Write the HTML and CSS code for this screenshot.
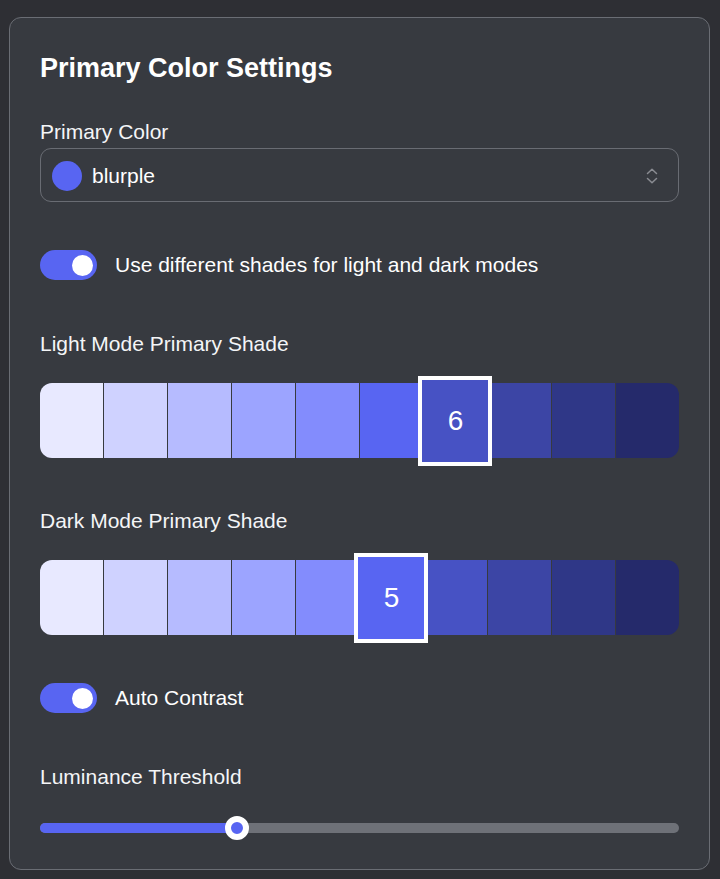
FILE: index.html
```html
<!DOCTYPE html>
<html lang="en">
<head>
<meta charset="utf-8">
<title>Primary Color Settings</title>
<link rel="stylesheet" href="styles.css">
</head>
<body>
  <section class="card">
    <h2 class="title">Primary Color Settings</h2>

    <label class="label label-first">Primary Color</label>
    <div class="select">
      <span class="select-dot"></span>
      <span class="select-value">blurple</span>
      <svg class="select-chevron" width="16" height="16" viewBox="0 0 16 16" aria-hidden="true">
        <path d="M3.5 5.5 L8 1.2 L12.5 5.5" fill="none" stroke="#8a8c92" stroke-width="1.5" stroke-linecap="round" stroke-linejoin="round"/>
        <path d="M3.5 10.5 L8 14.8 L12.5 10.5" fill="none" stroke="#8a8c92" stroke-width="1.5" stroke-linecap="round" stroke-linejoin="round"/>
      </svg>
    </div>

    <div class="toggle-row toggle-row-first">
      <span class="toggle"><span class="toggle-knob"></span></span>
      <span class="toggle-text">Use different shades for light and dark modes</span>
    </div>

    <label class="label label-section">Light Mode Primary Shade</label>
    <div class="shades">
      <div class="shade s0"></div>
      <div class="shade s1"></div>
      <div class="shade s2"></div>
      <div class="shade s3"></div>
      <div class="shade s4"></div>
      <div class="shade s5"></div>
      <div class="shade s6 selected"><span class="shade-num">6</span></div>
      <div class="shade s7"></div>
      <div class="shade s8"></div>
      <div class="shade s9"></div>
    </div>

    <label class="label label-section2">Dark Mode Primary Shade</label>
    <div class="shades shades-dark">
      <div class="shade s0"></div>
      <div class="shade s1"></div>
      <div class="shade s2"></div>
      <div class="shade s3"></div>
      <div class="shade s4"></div>
      <div class="shade s5 selected"><span class="shade-num">5</span></div>
      <div class="shade s6"></div>
      <div class="shade s7"></div>
      <div class="shade s8"></div>
      <div class="shade s9"></div>
    </div>

    <div class="toggle-row toggle-row-second">
      <span class="toggle"><span class="toggle-knob"></span></span>
      <span class="toggle-text">Auto Contrast</span>
    </div>

    <label class="label label-lum">Luminance Threshold</label>
    <div class="slider">
      <div class="slider-track">
        <div class="slider-fill" style="width: 197px"></div>
      </div>
      <span class="slider-thumb" style="left: 197px"></span>
    </div>
  </section>
</body>
</html>
```

FILE: styles.css
```css
* {
  box-sizing: border-box;
}

html, body {
  margin: 0;
  background: #2e2f34;
}

body {
  padding: 17px 0 9px 9px;
  font-family: "Liberation Sans", Arial, sans-serif;
  color: #ffffff;
}

.card {
  width: 701px;
  background: #373a40;
  border: 1px solid #6a6d74;
  border-radius: 12px;
  padding: 35px 30px 29px 30px;
  display: flex;
  flex-direction: column;
}

.title {
  margin: 0;
  font-size: 27px;
  line-height: 31px;
  font-weight: 700;
  color: #ffffff;
}

.label {
  display: block;
  font-size: 21px;
  line-height: 24px;
  color: #f4f5f7;
}

.label-first { margin-top: 36px; }
.label-section { margin-top: 52px; }
.label-section2 { margin-top: 51px; }
.label-lum { margin-top: 52px; }

.select {
  margin-top: 4px;
  height: 54px;
  border: 1px solid #696c73;
  border-radius: 11px;
  display: flex;
  align-items: center;
  padding: 1px 18px 0 11px;
}

.select-dot {
  width: 30px;
  height: 30px;
  border-radius: 50%;
  background: #5865f2;
  flex: none;
}

.select-value {
  margin-left: 10px;
  font-size: 21px;
  color: #ffffff;
  flex: 1;
}

.select-chevron {
  flex: none;
  display: block;
}

.toggle-row {
  display: flex;
  align-items: center;
  gap: 18px;
  height: 30px;
}

.toggle-row-first { margin-top: 48px; }
.toggle-row-second { margin-top: 48px; }

.toggle {
  width: 57px;
  height: 30px;
  border-radius: 15px;
  background: #5865f2;
  display: flex;
  align-items: center;
  justify-content: flex-end;
  padding-right: 4px;
  flex: none;
}

.toggle-knob {
  width: 21px;
  height: 21px;
  border-radius: 50%;
  background: #ffffff;
}

.toggle-text {
  font-size: 21px;
  color: #ffffff;
}

.shades {
  margin-top: 27px;
  height: 75px;
  display: flex;
}

.shade {
  flex: 1 1 0;
  border-right: 1px solid #373a40;
  position: relative;
  display: flex;
  align-items: center;
  justify-content: center;
}

.shade:first-child {
  border-radius: 12px 0 0 12px;
}

.shade:last-child {
  border-right: none;
  border-radius: 0 12px 12px 0;
}

.s0 { background: #e8e9ff; }
.s1 { background: #cfd2ff; }
.s2 { background: #b6bbff; }
.s3 { background: #9ca4ff; }
.s4 { background: #838cfd; }
.s5 { background: #5865f2; }
.s6 { background: #4752c4; }
.s7 { background: #3c45a5; }
.s8 { background: #2f3787; }
.s9 { background: #252a6b; }

.shade.selected {
  z-index: 1;
}

.shade.selected::before {
  content: "";
  position: absolute;
  top: -7px;
  bottom: -8px;
  left: -6px;
  right: -5px;
  border: 4px solid #ffffff;
  background: inherit;
  z-index: -1;
}

.shade-num {
  font-size: 28px;
  color: #ffffff;
}

.slider {
  margin-top: 27px;
  height: 24px;
  position: relative;
  display: flex;
  align-items: center;
}

.slider-track {
  width: 100%;
  height: 10px;
  border-radius: 5px;
  background: #6e7178;
  overflow: hidden;
}

.slider-fill {
  height: 100%;
  background: #5865f2;
}

.slider-thumb {
  position: absolute;
  top: 0;
  width: 24px;
  height: 24px;
  margin-left: -12px;
  border-radius: 50%;
  background: #5865f2;
  border: 6px solid #ffffff;
}
```
